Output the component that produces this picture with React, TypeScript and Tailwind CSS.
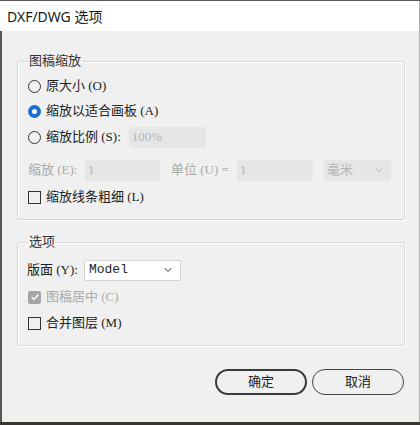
import { ChevronDown } from 'lucide-react'

const ui = { fontFamily: '"Liberation Serif", "Noto Sans CJK SC", serif' }

function Radio({ checked = false }: { checked?: boolean }) {
  return checked ? (
    <span className="flex h-[13px] w-[13px] items-center justify-center rounded-full bg-[#1a6fd6]">
      <span className="h-[5px] w-[5px] rounded-full bg-white" />
    </span>
  ) : (
    <span className="h-[13px] w-[13px] rounded-full border border-[#333]" />
  )
}

function Checkbox({ checked = false, disabled = false }: { checked?: boolean; disabled?: boolean }) {
  if (checked) {
    return (
      <span className={`flex h-[13px] w-[13px] items-center justify-center rounded-[2px] ${disabled ? 'bg-[#a6a6a6]' : 'bg-[#1a6fd6]'}`}>
        <svg viewBox="0 0 12 12" className="h-[10px] w-[10px]">
          <path d="M2 6.2 4.8 9 10 3" fill="none" stroke="#fff" strokeWidth="1.8" />
        </svg>
      </span>
    )
  }
  return <span className="h-[13px] w-[13px] border border-[#333] bg-transparent" />
}

function Group({ title, children, className }: { title: string; children: React.ReactNode; className?: string }) {
  return (
    <fieldset className={`rounded-[2px] border border-[#d7d7d7] px-[9px] shadow-[inset_1px_1px_0_#fff,1px_1px_0_#fff] ${className ?? ''}`}>
      <legend className="ml-[1px] h-[18px] px-[1px] text-[13px] leading-[18px] text-[#333]">{title}</legend>
      {children}
    </fieldset>
  )
}

export default function App() {
  return (
    <div className="flex h-[425px] w-[420px] flex-col overflow-hidden border-t border-[#5a5a5a] border-b-[3px] border-b-[#3b3530] bg-[#f0f0f0] text-[13px] text-[#222]" style={ui}>
      <div className="flex h-[30px] shrink-0 items-center border-r border-[#b0b0b0] bg-white pl-[7px] text-[14px] text-[#1a1a1a]" style={{ fontFamily: '"Noto Sans", "Noto Sans CJK SC", sans-serif' }}>
        DXF/DWG 选项
      </div>
      <div className="flex flex-1 flex-col border-l-2 border-r border-l-[#555] border-r-[#b0b0b0] pl-[15px] pr-[14px] pt-[21px]">
        <Group title="图稿缩放" className="pb-[10px]">
          <div className="flex flex-col pt-[4px]">
            <div className="flex h-[24px] items-center gap-[5px] pl-[1px]">
              <Radio />
              <span>原大小 (O)</span>
            </div>
            <div className="flex h-[26px] items-center gap-[5px] pl-[1px]">
              <Radio checked />
              <span>缩放以适合画板 (A)</span>
            </div>
            <div className="flex h-[26px] items-center pl-[1px]">
              <Radio />
              <span className="ml-[5px]">缩放比例 (S):</span>
              <div className="ml-[8px] flex h-[21px] w-[77px] items-center rounded-[2px] bg-[#e6e6e6] px-[3px] text-[#b5b5b5]">100%</div>
            </div>
            <div className="mt-[9px] flex h-[22px] items-center text-[#ababab]">
              <span className="w-[58px] pl-[1px]">缩放 (E):</span>
              <div className="flex h-[21px] w-[75px] items-center rounded-[2px] bg-[#e6e6e6] px-[3px] text-[#b5b5b5]">1</div>
              <span className="ml-[11px]">单位 (U) =</span>
              <div className="ml-[8px] flex h-[21px] w-[76px] items-center rounded-[2px] bg-[#e6e6e6] px-[3px] text-[#b5b5b5]">1</div>
              <div className="ml-[11px] flex h-[21px] w-[67px] items-center justify-between rounded-[2px] bg-[#e6e6e6] pl-[3px] pr-[6px] text-[#b5b5b5]">
                <span>毫米</span>
                <ChevronDown className="h-[12px] w-[12px]" strokeWidth={2} />
              </div>
            </div>
            <div className="mt-[4px] flex h-[24px] items-center gap-[5px] pl-[1px]">
              <Checkbox />
              <span>缩放线条粗细 (L)</span>
            </div>
          </div>
        </Group>

        <Group title="选项" className="mt-[13px] pb-[10px]">
          <div className="flex flex-col pt-[7px]">
            <div className="flex h-[24px] items-center">
              <span>版面 (Y):</span>
              <div className="ml-[6px] flex h-[21px] w-[97px] items-center justify-between rounded-[2px] border border-[#d3d3d3] bg-white pl-[4px] pr-[6px]">
                <span style={{ fontFamily: '"Liberation Mono", monospace' }}>Model</span>
                <ChevronDown className="h-[12px] w-[12px] text-[#333]" strokeWidth={2} />
              </div>
            </div>
            <div className="mt-[3px] flex h-[24px] items-center gap-[5px] pl-[1px] text-[#ababab]">
              <Checkbox checked disabled />
              <span>图稿居中 (C)</span>
            </div>
            <div className="mt-[2px] flex h-[24px] items-center gap-[5px] pl-[1px]">
              <Checkbox />
              <span>合并图层 (M)</span>
            </div>
          </div>
        </Group>

        <div className="mt-[23px] flex justify-end gap-[5px] pr-[1px]">
          <button className="flex h-[26px] w-[92px] items-center justify-center rounded-full border-2 border-[#3a3a3a] text-[13px] text-[#222]">确定</button>
          <button className="flex h-[26px] w-[92px] items-center justify-center rounded-full border border-[#444] text-[13px] text-[#222]">取消</button>
        </div>
      </div>
    </div>
  )
}
